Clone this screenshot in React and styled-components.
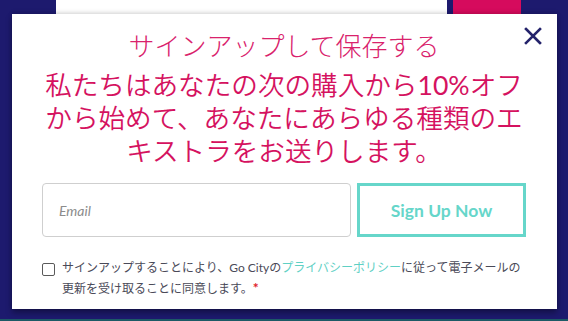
import React from 'react';
import styled, { createGlobalStyle } from 'styled-components';

const GlobalStyle = createGlobalStyle`
html, body {
  margin: 0;
  padding: 0;
  background: #1d1a6e;
}
body {
  width: 568px;
  height: 321px;
  overflow: hidden;
  font-family: Lato, "Noto Sans CJK JP", sans-serif;
}
`

const Page = styled.div`
position: relative;
width: 568px;
height: 321px;
background: #1d1a6e;
overflow: hidden;
`
const Backdrop = styled.div`
display: flex;
height: 14px;
padding-left: 56px;
gap: 6px;
`
const BackPanel = styled.div`
width: 391px;
background: #ffffff;
`
const BackAccent = styled.div`
width: 68px;
background: #d60b5d;
`
const Modal = styled.div`
position: relative;
width: 545px;
height: 295px;
margin-left: 12px;
box-sizing: border-box;
padding: 14px 31px 0 30px;
background: #ffffff;
box-shadow: 0 -2px 4px rgba(0, 0, 0, 0.12), 0 4px 6px rgba(0, 0, 0, 0.35);
`
const Title = styled.h2`
margin: 0;
font-family: "Noto Sans CJK JP", sans-serif;
font-weight: 300;
font-size: 26px;
line-height: 33px;
text-align: center;
color: #d9226c;
`
const Lead = styled.p`
margin: 8px -4px 0;
font-family: Lato, "Noto Sans CJK JP", sans-serif;
font-weight: 350;
font-size: 26.6px;
line-height: 33px;
text-align: center;
color: #d5125f;
`
const Figure = styled.span`
font-family: Lato, sans-serif;
font-weight: 400;
`
const CloseButton = styled.button`
position: absolute;
top: 12px;
right: 14px;
width: 20px;
height: 20px;
padding: 0;
border: none;
background: none;
color: #24236b;
`
const FormRow = styled.div`
display: flex;
gap: 6px;
margin-top: 15px;
height: 54px;
`
const EmailInput = styled.input`
flex: 0 0 309px;
box-sizing: border-box;
height: 54px;
padding: 0 16px;
border: 1px solid #cfcfcf;
border-radius: 4px;
font-family: Lato, sans-serif;
font-size: 14px;
font-style: italic;
color: #555;
&::placeholder {
  color: #8c8c8c;
}
`
const SubmitButton = styled.button`
flex: 1;
box-sizing: border-box;
height: 54px;
border: 3px solid #66d6ca;
background: #ffffff;
font-family: Lato, sans-serif;
font-weight: 700;
font-size: 17.5px;
color: #66d6ca;
`
const ConsentRow = styled.label`
display: flex;
align-items: flex-start;
gap: 7px;
margin-top: 21px;
`
const Checkbox = styled.span`
flex: 0 0 auto;
width: 11px;
height: 11px;
margin-top: 5px;
border: 1px solid #5a5a5a;
border-radius: 2px;
`
const ConsentText = styled.span`
font-family: Lato, "Noto Sans CJK JP", sans-serif;
font-size: 12px;
line-height: 20px;
color: #4a4a58;
`
const PolicyLink = styled.span`
color: #5fd0c4;
`
const Required = styled.span`
font-size: 14px;
font-weight: 700;
color: #e0202a;
`
const BottomStrip = styled.div`
position: absolute;
left: 0;
right: 0;
bottom: 0;
height: 2px;
background: #1d5a66;
`

export default function App() {
  return (
    <Page>
      <GlobalStyle />
      <Backdrop>
        <BackPanel />
        <BackAccent />
      </Backdrop>
      <Modal>
        <CloseButton aria-label="close">
          <svg width="20" height="20" viewBox="0 0 20 20">
            <path d="M3 3 L17 17 M17 3 L3 17" stroke="currentColor" strokeWidth="2.6" strokeLinecap="square" />
          </svg>
        </CloseButton>
        <Title>サインアップして保存する</Title>
        <Lead>
          私たちはあなたの次の購入から<Figure>10%</Figure>オフ<br />
          から始めて、あなたにあらゆる種類のエ<br />
          キストラをお送りします。
        </Lead>
        <FormRow>
          <EmailInput placeholder="Email" />
          <SubmitButton>Sign Up Now</SubmitButton>
        </FormRow>
        <ConsentRow>
          <Checkbox />
          <ConsentText>
            サインアップすることにより、Go Cityの<PolicyLink>プライバシーポリシー</PolicyLink>に従って電子メールの更新を受け取ることに同意します。<Required>*</Required>
          </ConsentText>
        </ConsentRow>
      </Modal>
      <BottomStrip />
    </Page>
  );
}
